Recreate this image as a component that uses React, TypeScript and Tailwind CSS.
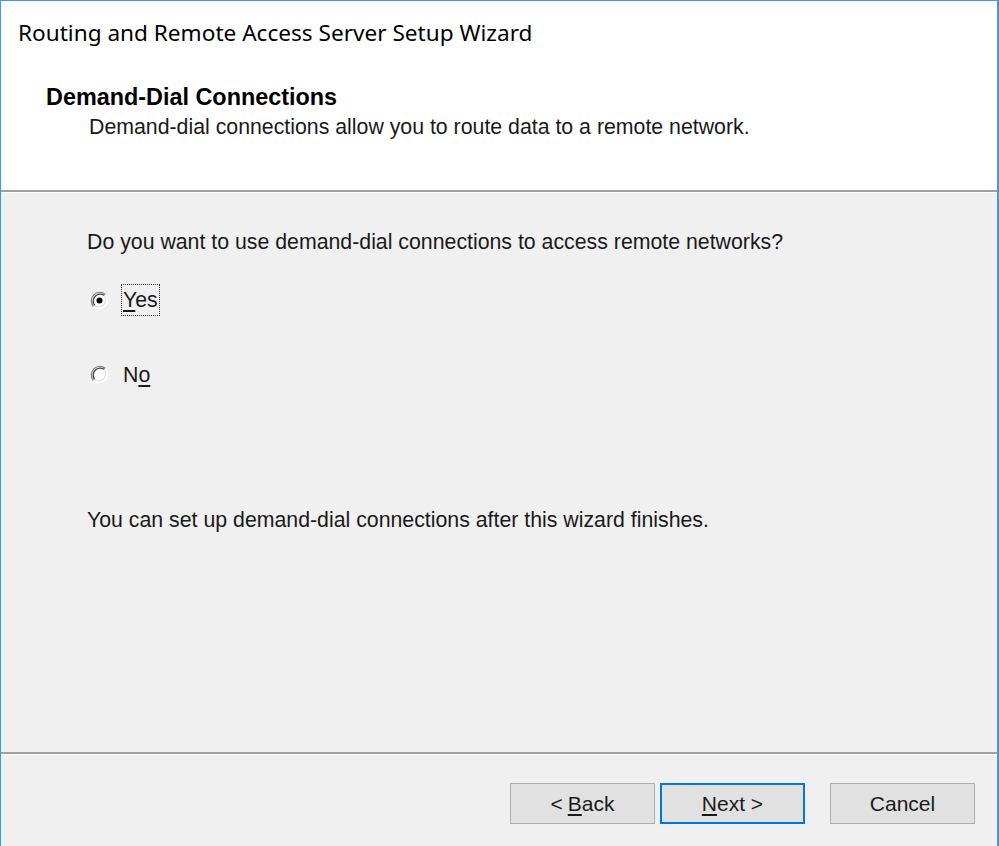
import React from 'react';

const sans = { fontFamily: '"Liberation Sans", Arial, sans-serif' };

function Radio({ checked }: { checked?: boolean }) {
  return (
    <svg width="19" height="19" viewBox="0 0 19 19" className="shrink-0">
      <circle cx="9.5" cy="9.5" r="8.5" fill="#ffffff" />
      <path d="M3.5 15.5 A8.5 8.5 0 0 1 15.5 3.5" fill="none" stroke="#808080" strokeWidth="1.3" />
      <path d="M4.6 14.4 A7 7 0 0 1 14.4 4.6" fill="none" stroke="#404040" strokeWidth="1.3" />
      <path d="M15.5 3.5 A8.5 8.5 0 0 1 3.5 15.5" fill="none" stroke="#ffffff" strokeWidth="1.3" />
      <path d="M14.4 4.6 A7 7 0 0 1 4.6 14.4" fill="none" stroke="#e3e3e3" strokeWidth="1.3" />
      {checked && <circle cx="9.5" cy="9.5" r="3" fill="#000000" />}
    </svg>
  );
}

function WizButton({ children, primary }: { children: React.ReactNode; primary?: boolean }) {
  return (
    <button
      className={`w-[145px] h-[41px] bg-[#e1e1e1] text-[21px] text-[#1a1a1a] flex items-center justify-center ${
        primary ? 'border-2 border-[#0078d7]' : 'border border-[#adadad]'
      }`}
      style={sans}
    >
      {children}
    </button>
  );
}

export default function App() {
  return (
    <div className="w-[999px] h-[846px] border-l border-t border-r-2 border-[#3c9ae8] flex flex-col bg-[#f0f0f0] overflow-hidden">
      {/* header */}
      <div className="h-[189px] bg-white shrink-0">
        <div
          className="pl-[17px] pt-[17px] text-[22.6px] leading-[30px] text-black"
          style={{ fontFamily: '"Noto Sans", "Open Sans", sans-serif' }}
        >
          Routing and Remote Access Server Setup Wizard
        </div>
        <div className="pl-[45px] pt-[34px] text-[23.4px] leading-[30px] font-bold text-black" style={sans}>
          Demand-Dial Connections
        </div>
        <div className="pl-[88px] text-[21.3px] leading-[30px] text-[#1a1a1a]" style={sans}>
          Demand-dial connections allow you to route data to a remote network.
        </div>
      </div>
      <div className="h-[2px] bg-[#a0a0a0] shrink-0" />
      <div className="h-px bg-white shrink-0" />

      {/* body */}
      <div className="flex-1 flex flex-col" style={sans}>
        <div className="pl-[86px] pt-[34px] text-[21.3px] leading-[30px] text-[#1a1a1a]">
          Do you want to use demand-dial connections to access remote networks?
        </div>
        <div className="pl-[89px] pt-[27px] flex items-center gap-[12px] h-[59px]">
          <Radio checked />
          <span className="text-[21.3px] leading-[30px] text-[#1a1a1a] border border-dotted border-[#333] px-[1px]">
            <span className="underline underline-offset-[3px]">Y</span>es
          </span>
        </div>
        <div className="pl-[89px] pt-[43px] flex items-center gap-[14px] h-[74px]">
          <Radio />
          <span className="text-[21.3px] leading-[30px] text-[#1a1a1a]">
            N<span className="underline underline-offset-[3px]">o</span>
          </span>
        </div>
        <div className="pl-[86px] pt-[115px] text-[21.3px] leading-[30px] text-[#1a1a1a]">
          You can set up demand-dial connections after this wizard finishes.
        </div>
      </div>

      {/* footer */}
      <div className="h-[2px] bg-[#a0a0a0] shrink-0" />
      <div className="h-px bg-white shrink-0" />
      <div className="h-[91px] shrink-0 flex items-start justify-end pt-[28px] pr-[22px]">
        <div className="flex items-center">
          <WizButton>
            &lt; <span className="underline underline-offset-[3px] ml-[5px]">B</span>ack
          </WizButton>
          <div className="w-[5px]" />
          <WizButton primary>
            <span className="underline underline-offset-[3px]">N</span>ext &gt;
          </WizButton>
          <div className="w-[25px]" />
          <WizButton>Cancel</WizButton>
        </div>
      </div>
    </div>
  );
}
